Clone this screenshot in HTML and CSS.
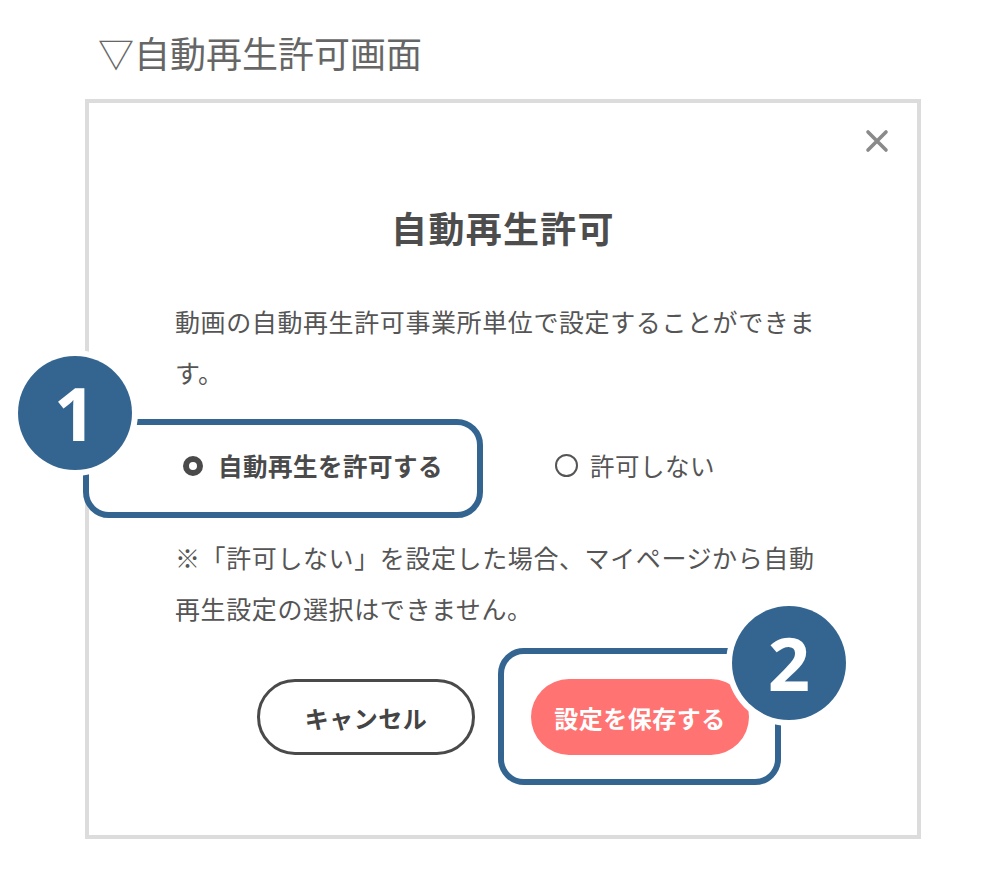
FILE: index.html
```html
<!DOCTYPE html>
<html lang="ja">
<head>
<meta charset="utf-8">
<title>自動再生許可画面</title>
<link rel="stylesheet" href="styles.css">
</head>
<body>
<div class="page">
  <h1 class="page-title">▽自動再生許可画面</h1>
  <div class="card">
    <button class="close" aria-label="閉じる">
      <svg width="24" height="24" viewBox="0 0 24 24"><path d="M3 3L21 21M21 3L3 21" stroke="#8a8a8a" stroke-width="3.6" stroke-linecap="round"/></svg>
    </button>
    <h2 class="card-title">自動再生許可</h2>
    <p class="text">動画の自動再生許可事業所単位で設定することができます。</p>
    <div class="radios">
      <label class="radio radio-on"><span class="dot dot-on"></span><span class="radio-label">自動再生を許可する</span></label>
      <label class="radio radio-off"><span class="dot dot-off"></span><span class="radio-label">許可しない</span></label>
    </div>
    <p class="text note">※「許可しない」を設定した場合、マイページから自動再生設定の選択はできません。</p>
    <div class="actions">
      <button class="btn btn-cancel">キャンセル</button>
      <button class="btn btn-save">設定を保存する</button>
    </div>

    <div class="hl hl-1"></div>
    <div class="hl hl-2"></div>
    <div class="badge badge-1">1</div>
    <div class="badge badge-2">2</div>
  </div>
</div>
</body>
</html>
```
FILE: styles.css
```css
* { box-sizing: border-box; }
html, body { margin: 0; padding: 0; background: #fff; }
body {
  font-family: "Noto Sans CJK JP", "Noto Sans", sans-serif;
  color: #555;
}
.page { width: 1006px; height: 892px; overflow: hidden; }
.page-title {
  margin: 34px 0 0 98px;
  font-size: 36px;
  line-height: 36px;
  font-weight: 400;
  color: #666;
  letter-spacing: 0;
}
.card {
  position: relative;
  margin: 29px 0 0 85px;
  width: 836px;
  border: 4px solid #dcdcdc;
  padding: 100px 86px 80px 86px;
  background: #fff;
}
.close {
  position: absolute;
  top: 26px;
  right: 28px;
  width: 24px;
  height: 24px;
  padding: 0;
  border: 0;
  background: none;
  display: flex;
}
.card-title {
  margin: 0;
  text-align: center;
  font-size: 36px;
  line-height: 48px;
  font-weight: 700;
  letter-spacing: 1.3px;
  color: #4d4d4d;
}
.text {
  margin: 45px 0 0;
  font-size: 25px;
  line-height: 51px;
  letter-spacing: 0.6px;
  color: #555;
}
.radios {
  margin-top: 42px;
  height: 51px;
  display: flex;
  align-items: center;
  padding-left: 8px;
}
.radio {
  display: flex;
  align-items: center;
  font-size: 24.5px;
  letter-spacing: 0.5px;
  color: #555;
}
.radio-on { width: 372px; font-weight: 700; gap: 15px; color: #4a4a4a; }
.radio-off { gap: 12px; }
.dot { display: block; border-radius: 50%; }
.dot-on { width: 20px; height: 20px; border: 6px solid #4a4a4a; }
.dot-off { width: 23px; height: 23px; border: 2px solid #555; }
.note { margin-top: 41px; }
.actions {
  margin-top: 45px;
  display: flex;
  justify-content: center;
  gap: 56px;
}
.btn {
  width: 218px;
  height: 76px;
  border-radius: 38px;
  font-family: inherit;
  font-size: 24px;
  font-weight: 700;
  letter-spacing: 0.5px;
  display: flex;
  align-items: center;
  justify-content: center;
  padding: 0;
}
.btn-cancel { background: #fff; border: 3px solid #4a4a4a; color: #444; }
.btn-save { background: #ff7372; border: 0; color: #fff; }

.hl {
  position: absolute;
  border: 6px solid #346591;
  border-radius: 26px;
  z-index: 1;
}
.hl-1 { left: -6px; top: 316px; width: 400px; height: 99px; }
.hl-2 { left: 409px; top: 545px; width: 283px; height: 137px; }
.badge {
  position: absolute;
  z-index: 2;
  width: 114px;
  height: 114px;
  border-radius: 50%;
  background: #346591;
  box-shadow: 0 0 0 6px #fff;
  color: #fff;
  font-family: "Noto Sans", "Liberation Sans", sans-serif;
  font-weight: 700;
  font-size: 74px;
  line-height: 114px;
  text-align: center;
}
.badge-1 { left: -71px; top: 253px; }
.badge-2 { left: 643px; top: 503px; }
```
